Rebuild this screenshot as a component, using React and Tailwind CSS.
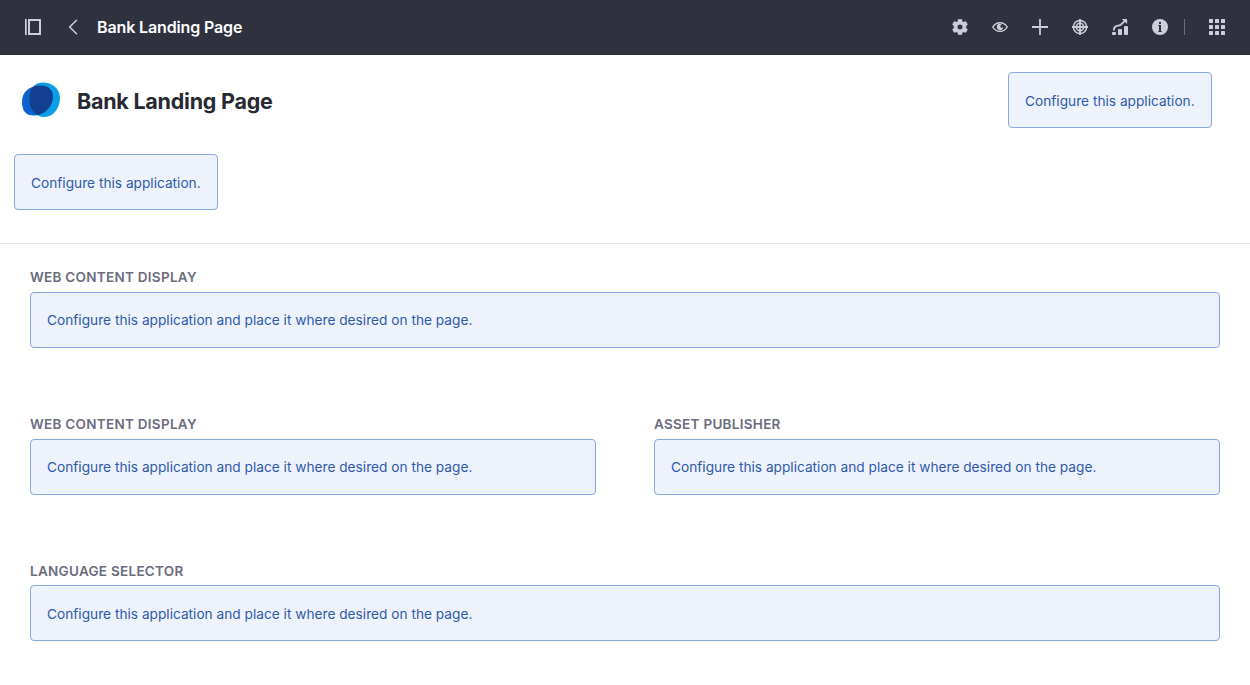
const NOTICE = 'Configure this application and place it where desired on the page.';

function Icon({ children }) {
  return (
    <button type="button" className="flex h-8 w-8 items-center justify-center text-[#cdced9]">
      <svg width="16" height="16" viewBox="0 0 16 16" fill="currentColor" aria-hidden="true">
        {children}
      </svg>
    </button>
  );
}

function GearIcon() {
  return (
    <Icon>
      <path
        fillRule="evenodd"
        d="M6.400.3h3.200l.5 2.100 1.400.8 2.300-.6 1.600 2.800-1.500 1.500v2.200l1.500 1.500-1.600 2.800-2.300-.6-1.400.8-.5 2.100H6.400l-.5-2.100-1.400-.8-2.300.6L.6 10.600l1.500-1.500V6.900L.6 5.400l1.600-2.800 2.300.6 1.400-.8zM8 5.200a2.800 2.800 0 1 0 0 5.600 2.800 2.800 0 0 0 0-5.600z"
        stroke="currentColor"
        strokeWidth=".6"
        strokeLinejoin="round"
      />
    </Icon>
  );
}

function EyeIcon() {
  return (
    <Icon>
      <path d="M.8 8C2.400 5.200 5 3.700 8 3.700S13.600 5.200 15.200 8C13.600 10.800 11 12.300 8 12.300S2.400 10.800.8 8z" fill="none" stroke="currentColor" strokeWidth="1.500" />
      <path d="M8 4.700A3.200 3.200 0 1 0 11.200 8c-.4.700-1.200 1-1.900.7C8.300 8.400 8 7.400 8.500 6.600c.3-.5.800-.7 1.300-.7A3.200 3.200 0 0 0 8 4.700z" />
    </Icon>
  );
}

function PlusIcon() {
  return (
    <Icon>
      <path d="M7.100 0h1.800v7.100H16v1.800H8.900V16H7.100V8.900H0V7.100h7.100z" />
    </Icon>
  );
}

function TargetIcon() {
  return (
    <Icon>
      <circle cx="8" cy="8" r="6.600" fill="none" stroke="currentColor" strokeWidth="1.500" />
      <circle cx="8" cy="8" r="3.700" fill="none" stroke="currentColor" strokeWidth="1.500" />
      <path d="M7.100 0h1.800v16H7.100zM0 7.100h16v1.800H0z" />
    </Icon>
  );
}

function AnalyticsIcon() {
  return (
    <Icon>
      <rect x="0" y="13" width="4" height="3" rx="1" />
      <rect x="6" y="10" width="4" height="6" rx="1" />
      <rect x="12" y="7" width="4" height="9" rx="1" />
      <path d="M1.800 10.700c.4-2.600 1.800-4 4.200-4.100 1.300 0 2-.1 2.900-1l4-3.700" fill="none" stroke="currentColor" strokeWidth="1.900" strokeLinecap="round" />
      <path d="M9.800 0h4.400c.6 0 .9.300.9.900v4.200z" />
    </Icon>
  );
}

function InfoIcon() {
  return (
    <Icon>
      <path
        fillRule="evenodd"
        d="M8 0a8 8 0 1 1 0 16A8 8 0 0 1 8 0zM7 3v2h2V3zM6.300 6v1H7v5h-.7v1h3.400v-1H9V6z"
      />
    </Icon>
  );
}

function GridIcon() {
  return (
    <Icon>
      {[0, 6, 12].map((y) =>
        [0, 6, 12].map((x) => <rect key={`${x}-${y}`} x={x} y={y} width="4" height="4" rx=".5" />)
      )}
    </Icon>
  );
}

function ControlBar() {
  return (
    <header className="flex h-[55px] items-center justify-between bg-[#30313f] px-[17px] pb-px">
      <div className="flex items-center gap-2">
        <Icon>
          <path fillRule="evenodd" d="M0 0h1.700v16H0zM3 0h13v16H3zM5 2v12h9V2z" />
        </Icon>
        <Icon>
          <path d="M11.500 1.200 4.700 8l6.800 6.800" fill="none" stroke="currentColor" strokeWidth="1.500" strokeLinecap="round" />
        </Icon>
        <h2 className="text-base font-semibold tracking-[-0.13px] text-white">Bank Landing Page</h2>
      </div>
      <div className="flex items-center">
        <div className="flex items-center gap-2">
          <GearIcon />
          <EyeIcon />
          <PlusIcon />
          <TargetIcon />
          <AnalyticsIcon />
          <InfoIcon />
        </div>
        <div className="mr-4 ml-2 h-4 w-px bg-[#6b6c7e]" />
        <GridIcon />
      </div>
    </header>
  );
}

function Logo() {
  return (
    <svg width="40" height="36" viewBox="0 0 40 36" aria-hidden="true">
      <path d="M21 .5C31 .2 39 6.500 39 16c0 10-7 19-15.500 19C14 35 8 27 8.500 17 9 7 13 .8 21 .5z" fill="#0b9fe8" />
      <path d="M19 3.500C27 3.200 32 8 32 14.500 31.500 24 25 33.200 13 33.500 5 33.700 1 29 1 20 1 10 8 4 19 3.500z" fill="#0b63ce" />
      <path d="M10.500 5.800C13 4.200 16 3.500 19 3.500 27 3.200 32 8 32 14.500 31.600 22.500 26.500 30.500 16.800 33 11.500 30.300 8.200 24.500 8.500 17c.2-4.500.8-8 2-11.200z" fill="#134091" />
    </svg>
  );
}

function Notice({ children, className = '' }) {
  return (
    <div className={`flex h-14 items-center rounded-[4px] border border-[#89a7e0] bg-[#eef2fa] px-4 text-[13.7px] whitespace-nowrap text-[#2e5aac] ${className}`}>
      {children}
    </div>
  );
}

function Portlet({ title, titleClass = 'mb-[5px]', noticeClass = '' }) {
  return (
    <section className="min-w-0 flex-1">
      <h3 className={`h-5 text-[13.5px] leading-5 font-semibold tracking-[0.28px] text-[#6b6c7e] uppercase ${titleClass}`}>{title}</h3>
      <Notice className={noticeClass}>{NOTICE}</Notice>
    </section>
  );
}

export default function App() {
  return (
    <div className="h-[685px] overflow-hidden bg-white font-['Inter',sans-serif]">
      <ControlBar />
      <div className="h-[189px] border-b border-[#e7e7ed] pt-[17px] pr-[38px] pl-[14px]">
        <div className="flex h-14 items-center justify-between">
          <div className="flex items-center gap-4 pl-[7px]">
            <Logo />
            <h1 className="pt-0.5 text-[21.5px] font-bold tracking-[-0.24px] text-[#272833]">Bank Landing Page</h1>
          </div>
          <Notice className="w-[204px] pt-0.5">Configure this application.</Notice>
        </div>
        <Notice className="mt-[26px] w-[204px] pt-0.5">Configure this application.</Notice>
      </div>
      <main className="px-[30px] pt-[23px]">
        <Portlet title="Web Content Display" />
        <div className="my-[66px] flex gap-[58px]">
          <Portlet title="Web Content Display" />
          <Portlet title="Asset Publisher" />
        </div>
        <Portlet title="Language Selector" titleClass="mb-1" noticeClass="pt-0.5" />
      </main>
    </div>
  );
}
